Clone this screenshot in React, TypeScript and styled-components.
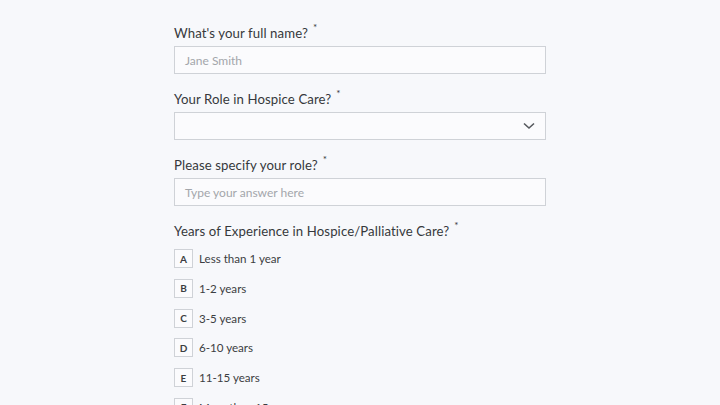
import React from "react";
import styled, { createGlobalStyle } from "styled-components";

const Global = createGlobalStyle`
  html, body { margin: 0; padding: 0; background: #f7f8fb; }
  body { font-family: Lato, "Open Sans", sans-serif; color: #3a3c40; }
  * { box-sizing: border-box; }
`;

const Page = styled.div`
  width: 720px;
  height: 405px;
  overflow: hidden;
  background: #f7f8fb;
  display: flex;
  justify-content: center;
`;

const Form = styled.div`
  width: 372px;
  padding-top: 24px;
  display: flex;
  flex-direction: column;
`;

const Field = styled.div`
  display: flex;
  flex-direction: column;
  margin-bottom: 16px;
`;

const Label = styled.div`
  font-size: 13.2px;
  line-height: 18px;
  height: 18px;
  color: #36383c;
  margin-bottom: 4px;
  letter-spacing: 0.1px;
`;

const Star = styled.span`
  display: inline-block;
  font-size: 10px;
  line-height: 0;
  margin-left: 5px;
  vertical-align: top;
  position: relative;
  top: 3px;
`;

const Input = styled.div`
  height: 28px;
  border: 1px solid #cfd2d7;
  background: #fbfbfd;
  display: flex;
  align-items: center;
  justify-content: space-between;
  padding: 0 10px;
  font-size: 12px;
  color: #a3a6ab;
`;

const Options = styled.div`
  display: flex;
  flex-direction: column;
  gap: 10.75px;
  margin-top: 5px;
`;

const Option = styled.div`
  display: flex;
  align-items: center;
  gap: 6px;
  font-size: 11.6px;
  color: #3c3e42;
`;

const Key = styled.span`
  width: 19px;
  height: 19px;
  border: 1px solid #cfd2d7;
  background: #fbfbfd;
  display: flex;
  align-items: center;
  justify-content: center;
  font-size: 10px;
  font-weight: 700;
  color: #3c3e42;
`;

const Chevron = () => (
  <svg width="12" height="8" viewBox="0 0 12 8" fill="none">
    <path d="M1 1.5 L6 6 L11 1.5" stroke="#55585d" strokeWidth="1.6" />
  </svg>
);

const options = [
  ["A", "Less than 1 year"],
  ["B", "1-2 years"],
  ["C", "3-5 years"],
  ["D", "6-10 years"],
  ["E", "11-15 years"],
  ["F", "More than 15 years"],
];

export default function App() {
  return (
    <Page>
      <Global />
      <Form>
        <Field>
          <Label>
            What's your full name?<Star>*</Star>
          </Label>
          <Input>Jane Smith</Input>
        </Field>
        <Field>
          <Label>
            Your Role in Hospice Care?<Star>*</Star>
          </Label>
          <Input>
            <span />
            <Chevron />
          </Input>
        </Field>
        <Field>
          <Label>
            Please specify your role?<Star>*</Star>
          </Label>
          <Input>Type your answer here</Input>
        </Field>
        <Field>
          <Label>
            Years of Experience in Hospice/Palliative Care?<Star>*</Star>
          </Label>
          <Options>
            {options.map(([k, t]) => (
              <Option key={k}>
                <Key>{k}</Key>
                {t}
              </Option>
            ))}
          </Options>
        </Field>
      </Form>
    </Page>
  );
}
